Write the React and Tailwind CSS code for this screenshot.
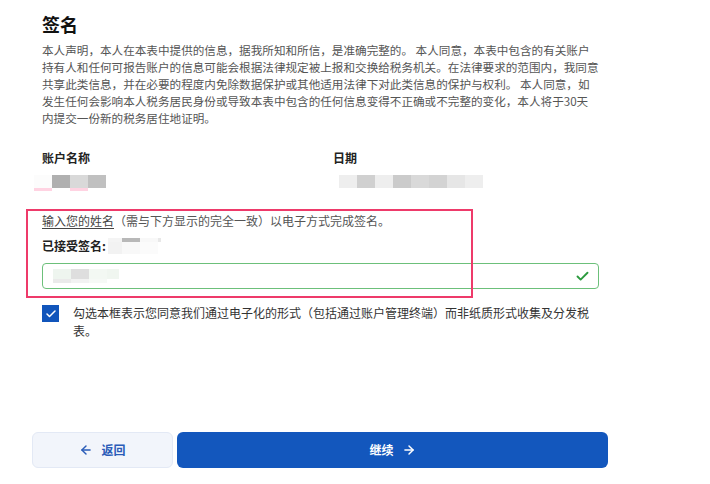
import React from "react";
import { Check, ArrowLeft, ArrowRight } from "lucide-react";

const font = { fontFamily: '"Noto Sans CJK SC", "Noto Sans", sans-serif' };

function Blocks({ colors, h = "h-[13px]", w = "w-[18px]" }) {
  return (
    <div className="flex">
      {colors.map((c, i) => (
        <div key={i} className={`${h} ${w}`} style={{ backgroundColor: c }} />
      ))}
    </div>
  );
}

export default function App() {
  return (
    <div className="relative w-[710px] h-[484px] bg-white" style={font}>
      <div className="px-[42px] pt-[12px]">
        <h1 className="text-[18px] leading-[24px] font-bold text-[#111]">签名</h1>
        <p className="mt-[6px] w-[558px] text-[11.6px] leading-[17px] text-[#555]">
          本人声明，本人在本表中提供的信息，据我所知和所信，是准确完整的。 本人同意，本表中包含的有关账户持有人和任何可报告账户的信息可能会根据法律规定被上报和交换给税务机关。在法律要求的范围内，我同意共享此类信息，并在必要的程度内免除数据保护或其他适用法律下对此类信息的保护与权利。 本人同意，如发生任何会影响本人税务居民身份或导致本表中包含的任何信息变得不正确或不完整的变化，本人将于30天<br />内提交一份新的税务居住地证明。
        </p>

        <div className="mt-[22px] grid grid-cols-[291px_1fr]">
          <div>
            <div className="text-[12px] leading-[18px] font-bold text-[#222]">账户名称</div>
            <div className="mt-[8px] -ml-[8px]">
              <Blocks colors={["#fcfcfc", "#b0b0b0", "#d9d9d9", "#c0c0c0"]} />
              <div className="flex h-[3px]">
                <div className="w-[18px] bg-[#ffd3e2]" />
                <div className="w-[18px]" />
                <div className="w-[18px] bg-[#ffd3e2]" />
              </div>
            </div>
          </div>
          <div>
            <div className="text-[12px] leading-[18px] font-bold text-[#222]">日期</div>
            <div className="mt-[8px] ml-[6px]">
              <Blocks colors={["#eeeeee", "#d0d0d0", "#eeeeee", "#cbcbcb", "#d9d9d9", "#d3d3d3", "#e6e6e6", "#eeeeee"]} />
            </div>
          </div>
        </div>

        <div className="mt-[21px] text-[12px] leading-[18px] text-[#555]">
          <span className="underline underline-offset-2 text-[#444]">输入您的姓名</span>（需与下方显示的完全一致）以电子方式完成签名。
        </div>
        <div className="mt-[7px] flex items-center text-[12px] leading-[18px] font-bold text-[#222]">
          <span>已接受签名:</span>
          <div className="ml-[2px] flex flex-col">
            <div className="flex h-[4px]">
              <div className="w-[14px] bg-[#f4f4f4]" />
              <div className="w-[18px] bg-[#b8b8b8]" />
              <div className="w-[18px] bg-[#f8f8f8]" />
              <div className="w-[3px] bg-[#e8e8e8]" />
            </div>
            <div className="flex h-[12px]">
              <div className="w-[14px] bg-[#f2f2f2]" />
              <div className="w-[18px] bg-[#f8f8f8]" />
              <div className="w-[18px] bg-[#fbfbfb]" />
            </div>
          </div>
        </div>

        <div className="mt-[8px] h-[26px] w-[557px] rounded-[4px] border border-[#6cc07a] flex items-center justify-between pl-[10px] pr-[8px]">
          <div className="flex flex-col">
            <div className="flex h-[10px]">
              <div className="w-[18px] bg-[#eef5ef]" />
              <div className="w-[18px] bg-[#dedede]" />
              <div className="w-[18px] bg-[#f3f8f3]" />
              <div className="w-[12px] bg-[#f0f6f0]" />
            </div>
            <div className="flex h-[4px]">
              <div className="w-[18px] bg-[#eaeaea]" />
              <div className="w-[18px] bg-[#f2f2f2]" />
              <div className="w-[18px] bg-[#f6f9f6]" />
            </div>
          </div>
          <Check size={15} strokeWidth={3} className="text-[#2b9a3e]" />
        </div>

        <div className="mt-[15px] flex items-start">
          <div className="mt-[1px] w-[17px] h-[17px] bg-[#1155bb] flex items-center justify-center shrink-0">
            <Check size={12} strokeWidth={3} className="text-white" />
          </div>
          <div className="ml-[14px] w-[527px] text-[12px] leading-[18px] text-[#333]">
            勾选本框表示您同意我们通过电子化的形式（包括通过账户管理终端）而非纸质形式收集及分发税表。
          </div>
        </div>
      </div>

      <div className="mt-[92px] px-[32px] flex gap-[4px]">
        <button className="w-[141px] h-[36px] rounded-[6px] bg-[#f2f5fb] border border-[#e3e9f5] flex items-center justify-center gap-[8px] text-[#2a5cb8] text-[12px] font-bold">
          <ArrowLeft size={14} strokeWidth={2.5} />
          <span>返回</span>
        </button>
        <button className="w-[431px] h-[36px] rounded-[6px] bg-[#1357bd] flex items-center justify-center gap-[8px] text-white text-[12px] font-bold">
          <span>继续</span>
          <ArrowRight size={14} strokeWidth={2.5} />
        </button>
      </div>

      <div className="absolute left-[26px] top-[209px] w-[447px] h-[89px] border-2 border-[#ee3a6a] pointer-events-none" />
    </div>
  );
}
